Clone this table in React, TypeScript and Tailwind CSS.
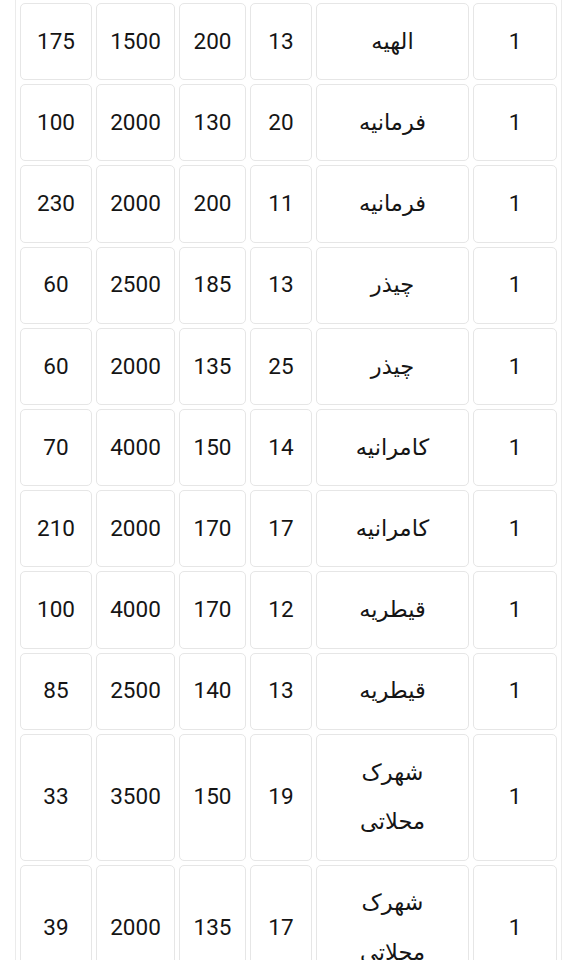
const rows: [string, string, string, string, string, string][] = [
  ["1", "الهیه", "13", "200", "1500", "175"],
  ["1", "فرمانیه", "20", "130", "2000", "100"],
  ["1", "فرمانیه", "11", "200", "2000", "230"],
  ["1", "چیذر", "13", "185", "2500", "60"],
  ["1", "چیذر", "25", "135", "2000", "60"],
  ["1", "کامرانیه", "14", "150", "4000", "70"],
  ["1", "کامرانیه", "17", "170", "2000", "210"],
  ["1", "قیطریه", "12", "170", "4000", "100"],
  ["1", "قیطریه", "13", "140", "2500", "85"],
  ["1", "شهرک محلاتی", "19", "150", "3500", "33"],
  ["1", "شهرک محلاتی", "17", "135", "2000", "39"],
];

// column widths, right to left
const widths = ["w-[84px]", "w-[153px]", "w-[62px]", "w-[67px]", "w-[79px]", "w-[72px]"];

export default function App() {
  return (
    <div className="min-h-screen bg-white font-['Roboto','DejaVu_Sans',sans-serif] text-[#151515]">
      <div className="ml-[15px] mr-[14px] -mt-px border-x border-[#ebebeb]">
        <table dir="rtl" className="w-full table-fixed border-separate border-spacing-[4px]">
          <colgroup>
            {widths.map((w, i) => (
              <col key={i} className={w} />
            ))}
          </colgroup>
          <tbody>
            {rows.map((r, i) => (
              <tr key={i}>
                {r.map((c, j) => (
                  <td
                    key={j}
                    className={`rounded-[5px] border border-[#e6e6e6] py-[12.75px] text-center align-middle text-[22.5px] leading-[49.7px] ${j === 1 ? "px-6 text-[21px]" : "px-1"}`}
                  >
                    {c}
                  </td>
                ))}
              </tr>
            ))}
          </tbody>
        </table>
      </div>
    </div>
  );
}
